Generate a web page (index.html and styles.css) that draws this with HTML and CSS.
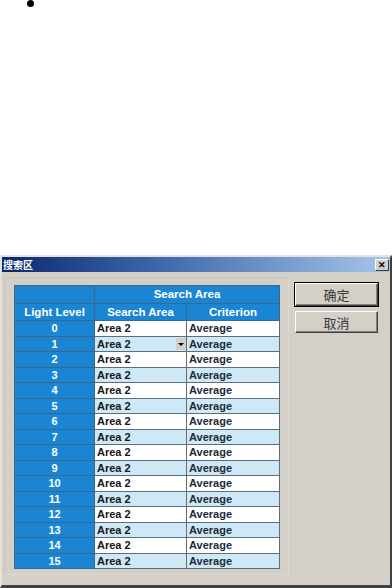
FILE: index.html
```html
<!DOCTYPE html>
<html>
<head>
  <title>搜索区</title>
  <link rel="stylesheet" href="styles.css">
</head>
<body>
  <div class="top">
    <ul class="stray">
      <li></li>
    </ul>
  </div>
  <div class="dialog">
    <div class="titlebar">
      <span class="title">搜索区</span>
      <span class="close">&#x2715;</span>
    </div>
    <div class="client">
      <div class="frame">
        <table class="grid">
          <tr class="head">
            <th class="level"></th>
            <th colspan="2">Search Area</th>
          </tr>
          <tr class="head">
            <th class="level">Light Level</th>
            <th class="area">Search Area</th>
            <th class="crit">Criterion</th>
          </tr>
          <tr><th>0</th><td>Area 2</td><td class="c">Average</td></tr>
          <tr class="alt"><th>1</th><td><div class="combo"><span>Area 2</span><span class="drop"></span></div></td><td class="c">Average</td></tr>
          <tr><th>2</th><td>Area 2</td><td class="c">Average</td></tr>
          <tr class="alt"><th>3</th><td>Area 2</td><td class="c">Average</td></tr>
          <tr><th>4</th><td>Area 2</td><td class="c">Average</td></tr>
          <tr class="alt"><th>5</th><td>Area 2</td><td class="c">Average</td></tr>
          <tr><th>6</th><td>Area 2</td><td class="c">Average</td></tr>
          <tr class="alt"><th>7</th><td>Area 2</td><td class="c">Average</td></tr>
          <tr><th>8</th><td>Area 2</td><td class="c">Average</td></tr>
          <tr class="alt"><th>9</th><td>Area 2</td><td class="c">Average</td></tr>
          <tr><th>10</th><td>Area 2</td><td class="c">Average</td></tr>
          <tr class="alt"><th>11</th><td>Area 2</td><td class="c">Average</td></tr>
          <tr><th>12</th><td>Area 2</td><td class="c">Average</td></tr>
          <tr class="alt"><th>13</th><td>Area 2</td><td class="c">Average</td></tr>
          <tr><th>14</th><td>Area 2</td><td class="c">Average</td></tr>
          <tr class="alt"><th>15</th><td>Area 2</td><td class="c">Average</td></tr>
        </table>
      </div>
      <div class="buttons">
        <button class="btn default">确定</button>
        <button class="btn">取消</button>
      </div>
    </div>
  </div>
</body>
</html>
```

FILE: styles.css
```css
body {
  margin: 0;
  font-family: "Liberation Sans", Arial, "Noto Sans CJK SC", sans-serif;
  background: #ffffff;
}
.top {
  height: 255px;
}
.stray {
  margin: 0;
  padding-left: 48px;
  font-family: "Liberation Serif", serif;
  font-size: 24px;
  list-style: disc;
}
.stray li {
  line-height: 7px;
  height: 7px;
}
.dialog {
  height: 333px;
  box-sizing: border-box;
  background: #d4d0c8;
  border-top: 2px solid #e4e2dc;
  border-left: 2px solid #e4e2dc;
  border-right: 2px solid #404040;
  border-bottom: 3px solid #404040;
  display: flex;
  flex-direction: column;
}
.titlebar {
  height: 15px;
  background: linear-gradient(to right, #0b2870 0%, #3d67aa 40%, #a8c6ea 100%);
  display: flex;
  align-items: center;
  justify-content: space-between;
  padding: 0 1px 0 1px;
}
.title {
  color: #ffffff;
  font-family: "Noto Sans CJK SC", sans-serif;
  font-weight: bold;
  font-size: 10px;
  line-height: 15px;
}
.close {
  width: 14px;
  height: 12px;
  box-sizing: border-box;
  background: #d4d0c8;
  border: 1px solid;
  border-color: #ffffff #404040 #404040 #ffffff;
  font-size: 9px;
  font-weight: bold;
  line-height: 10px;
  text-align: center;
  color: #000000;
}
.client {
  flex: 1;
  display: flex;
  align-items: flex-start;
  padding: 5px 0 0 2px;
}
.frame {
  border: 1px solid;
  border-color: #cac6be #dcd9d2 #dcd9d2 #cac6be;
  padding: 7px 8px 5px 9px;
}
.grid {
  border-collapse: collapse;
  font-size: 11px;
  font-weight: bold;
}
.grid th,
.grid td {
  border: 1px solid #5c6e7e;
  padding: 0 2px;
  height: 15px;
  line-height: 13px;
  white-space: nowrap;
}
.grid tr.alt th,
.grid tr.alt td {
  height: 14px;
}
.grid th {
  background: #1a86d3;
  color: #ffffff;
  text-align: center;
  width: 75px;
  border-color: #3f6688;
}
.grid td {
  background: #ffffff;
  color: #141820;
  width: 87px;
}
.grid td.c {
  color: #1c2a38;
  width: 88px;
}
.grid tr.alt td {
  background: #cfe8f6;
}
.grid tr.head th {
  height: 16px;
  font-size: 11.5px;
}
.grid tr.head:first-child th {
  height: 17px;
}
.combo {
  display: flex;
  justify-content: space-between;
  align-items: center;
}
.drop {
  width: 10px;
  height: 12px;
  background: #d4d0c8;
  position: relative;
  margin-right: -2px;
}
.drop::after {
  content: "";
  position: absolute;
  left: 2px;
  top: 5px;
  border-left: 3px solid transparent;
  border-right: 3px solid transparent;
  border-top: 3px solid #000000;
}
.buttons {
  display: flex;
  flex-direction: column;
  gap: 5px;
  margin-left: 6px;
  margin-top: 6px;
}
.btn {
  width: 83px;
  height: 22px;
  background: #d4d0c8;
  border: 1px solid;
  border-color: #ffffff #404040 #404040 #ffffff;
  box-shadow: inset -1px -1px 0 #808080;
  font-family: "Noto Sans CJK SC", sans-serif;
  font-size: 13px;
  color: #383838;
  padding: 0;
}
.btn.default {
  height: 23px;
  outline: 1px solid #000000;
  outline-offset: 0;
}
```
